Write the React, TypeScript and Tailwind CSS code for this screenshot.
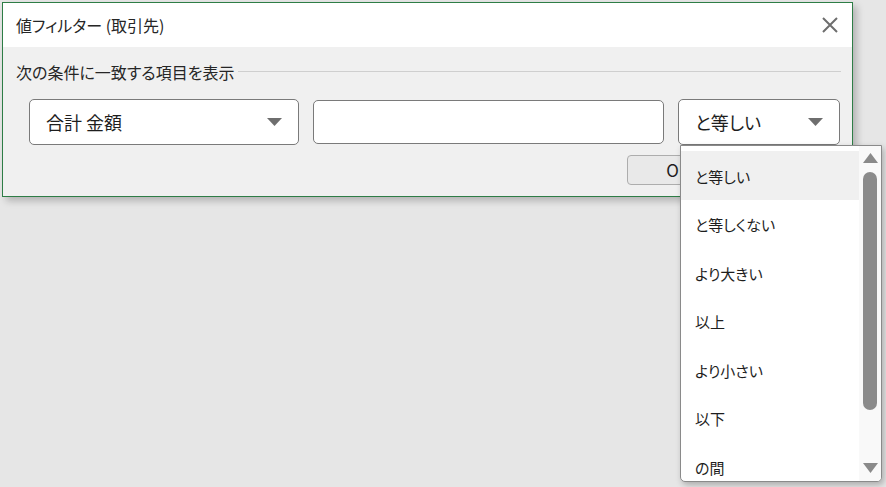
import React from "react";

const font = "font-['Yu_Gothic_UI','Noto_Sans_CJK_JP',sans-serif] [font-feature-settings:'palt']";

const options = ["と等しい", "と等しくない", "より大きい", "以上", "より小さい", "以下", "の間"];

function Caret() {
  return (
    <svg width="15" height="8" viewBox="0 0 15 8" className="shrink-0">
      <path d="M0 0 H15 L7.5 8 Z" fill="#6e6e6e" />
    </svg>
  );
}

function ComboBox({ label, className }: { label: string; className: string }) {
  return (
    <div
      className={`flex items-center justify-between h-[46px] bg-white border border-[#7a7a7a] rounded-[5px] pl-4 pr-[16px] ${className}`}
    >
      <span className="text-[18px] text-[#1e1e1e]">{label}</span>
      <Caret />
    </div>
  );
}

function OptionList() {
  return (
    <div className="absolute left-[680px] top-[145px] w-[202px] h-[337px] bg-white border border-[#8a8a8a] rounded-b-[5px] shadow-[2px_3px_6px_rgba(0,0,0,0.25)] flex overflow-hidden">
      {/* items */}
      <div className="flex-1 pt-[5px]">
        {options.map((o, i) => (
          <div
            key={o}
            className={`h-[48.5px] flex items-center pl-[14px] pt-[3px] text-[15px] text-[#1e1e1e] ${i === 0 ? "bg-[#f0f0f0]" : ""}`}
          >
            {o}
          </div>
        ))}
      </div>

      {/* scrollbar */}
      <div className="w-[22px] bg-[#f9f9f9] flex flex-col items-center pt-[7px] pb-[8px]">
        <svg width="15" height="10" viewBox="0 0 15 10">
          <path d="M7.5 0 L15 10 H0 Z" fill="#8a8a8a" />
        </svg>
        <div className="mt-[9px] w-[14px] h-[238px] rounded-full bg-[#8b8b8b]" />
        <div className="flex-1" />
        <svg width="15" height="10" viewBox="0 0 15 10">
          <path d="M0 0 H15 L7.5 10 Z" fill="#8a8a8a" />
        </svg>
      </div>
    </div>
  );
}

export default function App() {
  return (
    <main className={`relative w-[886px] h-[487px] bg-[#e6e6e6] overflow-hidden ${font}`}>
      <div className="pt-[2px] pl-[2px]">
        <section className="w-[851px] h-[195px] border border-[#2e7d46] bg-[#f0f0f0] shadow-[4px_4px_7px_rgba(0,0,0,0.22)] flex flex-col">
          {/* title bar */}
          <div className="h-[44px] bg-white flex items-center justify-between pl-[13px] pr-[14px]">
            <h1 className="text-[16px] text-[#262626]">値フィルター (取引先)</h1>
            <svg width="16" height="16" viewBox="0 0 16 16">
              <path d="M1 1 L15 15 M15 1 L1 15" stroke="#6e6e6e" strokeWidth="2" />
            </svg>
          </div>

          {/* body */}
          <div className="flex flex-col pl-[13px] pr-[11px]">
            <div className="flex items-center gap-1 mt-[16px] h-[18px]">
              <span className="text-[16px] text-[#262626] whitespace-nowrap">次の条件に一致する項目を表示</span>
              <div className="flex-1 h-px bg-[#cfcfcf] mt-[-2px]" />
            </div>

            <div className="flex items-center mt-[18px] pl-[13px] gap-[14px]">
              <ComboBox label="合計 金額" className="w-[270px]" />
              <div className="w-[351px] h-[44px] bg-white border border-[#7a7a7a] rounded-[5px]" />
              <ComboBox label="と等しい" className="w-[162px]" />
            </div>

            {/* buttons (mostly under the open list) */}
            <div className="flex mt-[10px] pl-[611px]">
              <button className="w-[102px] h-[30px] rounded-[4px] border border-[#adadad] bg-[#e9e9e9] text-[17px] text-[#1e1e1e] flex items-center justify-center">
                OK
              </button>
            </div>
          </div>
        </section>
      </div>

      <OptionList />
    </main>
  );
}
